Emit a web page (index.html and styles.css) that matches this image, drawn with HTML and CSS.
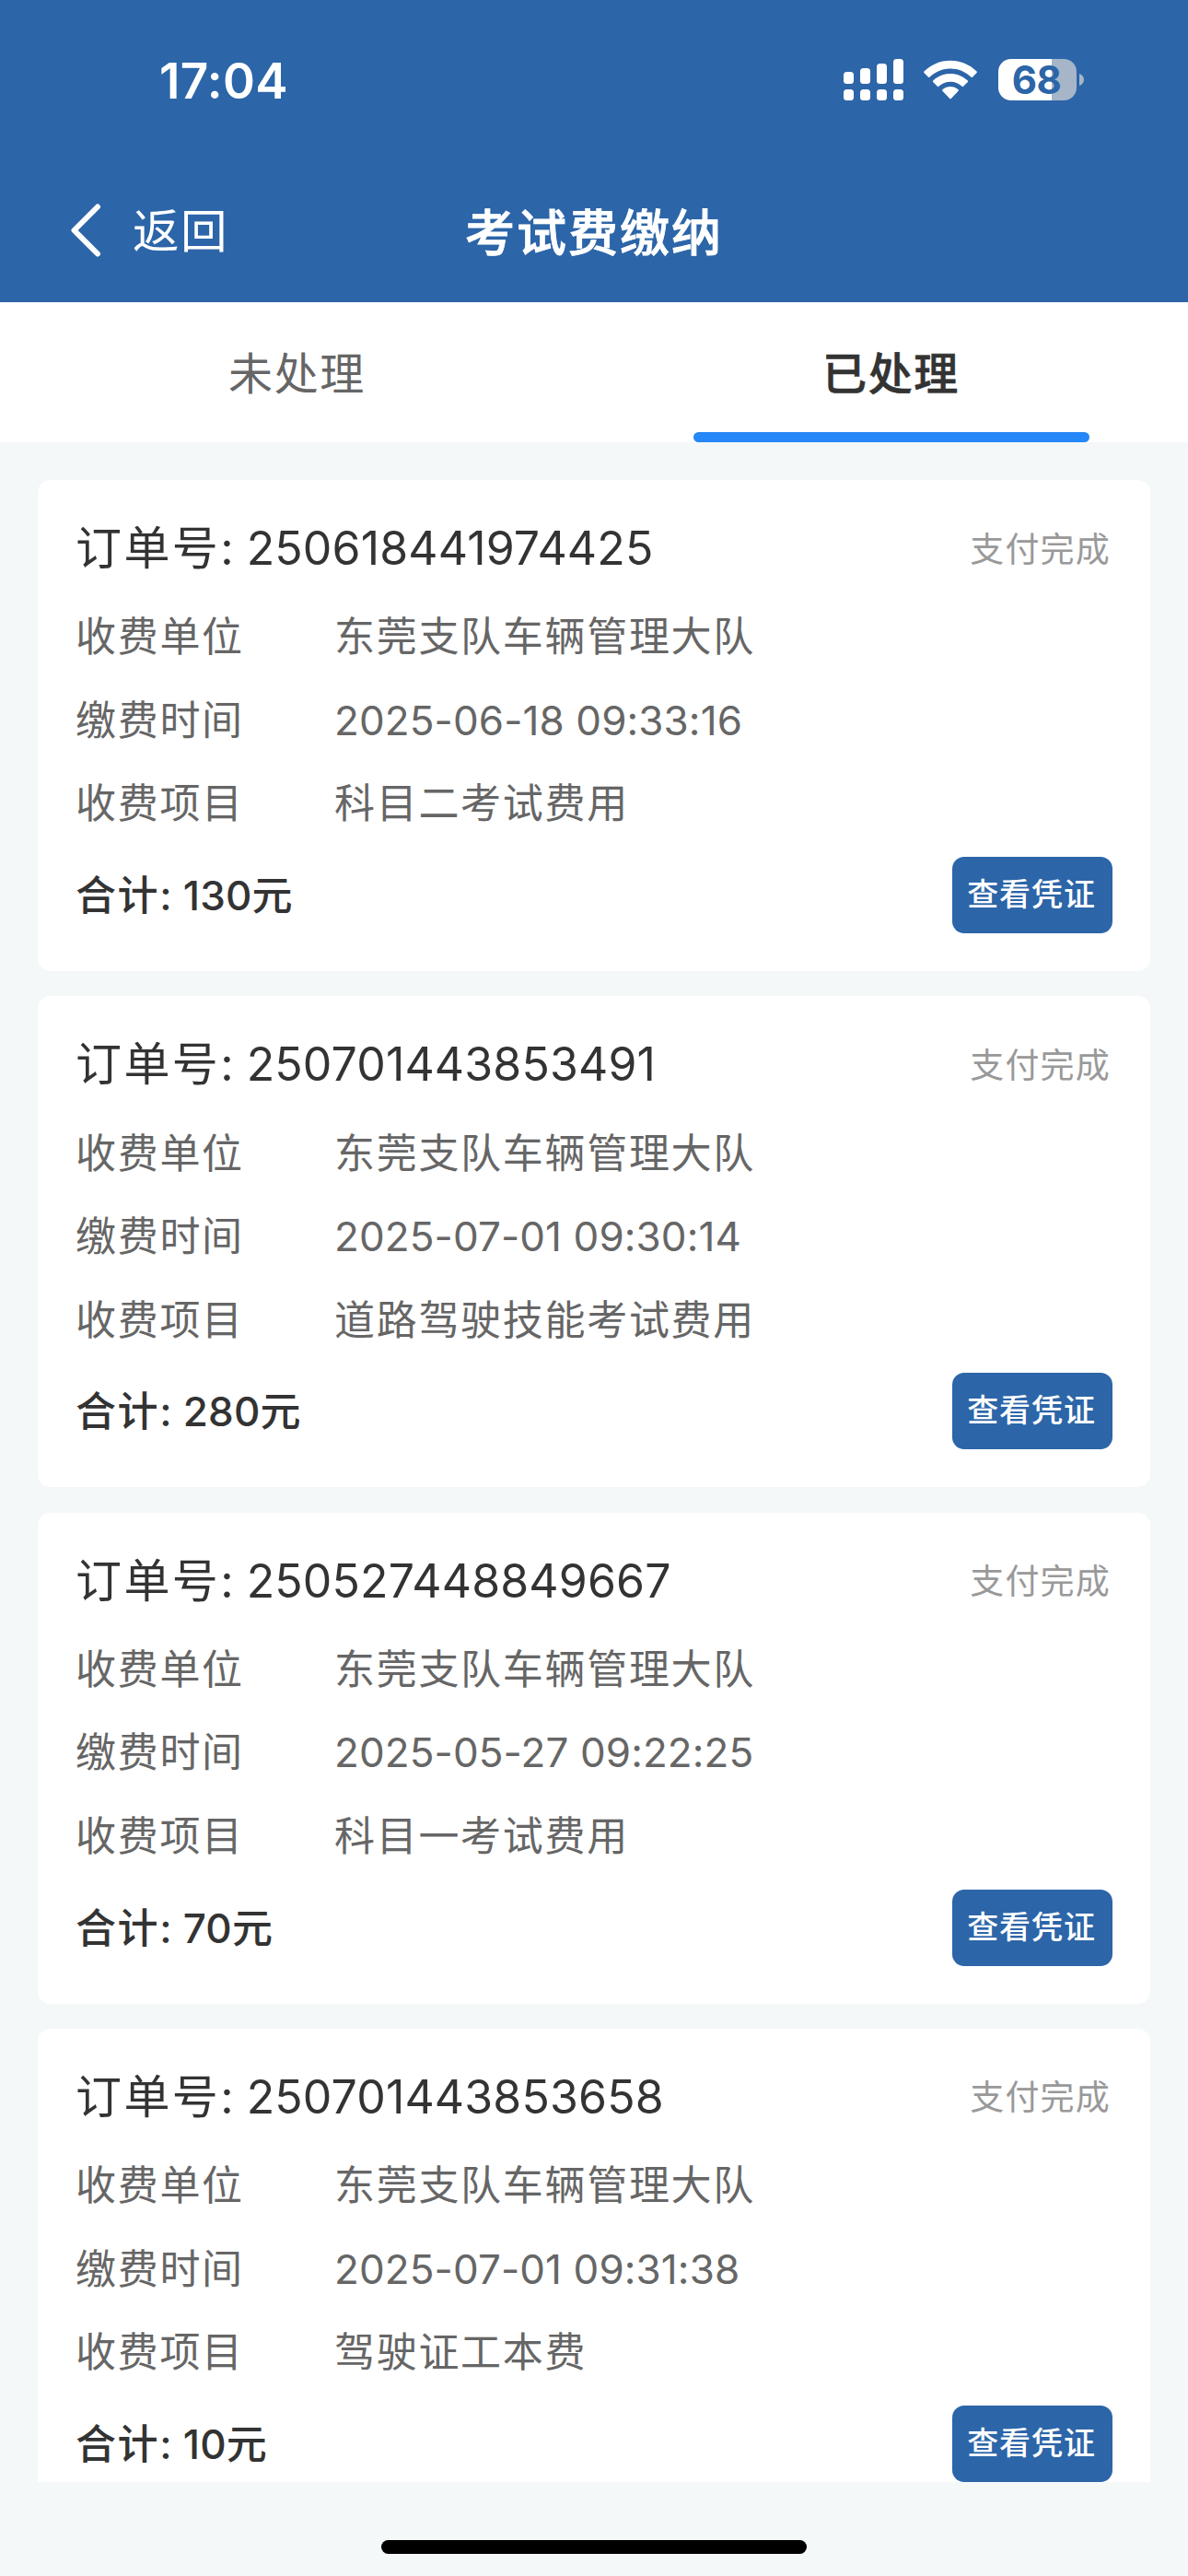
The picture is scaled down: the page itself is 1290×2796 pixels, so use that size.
FILE: index.html
```html
<!DOCTYPE html>
<html lang="zh-CN">
<head>
<meta charset="utf-8">
<title>考试费缴纳</title>
<link rel="stylesheet" href="styles.css">
</head>
<body>
<header class="header">
  <div class="status">
    <span class="time">17:04</span>
    <div class="status-icons">
      <svg class="signal" width="65" height="45" viewBox="0 0 65 45" fill="#fff">
        <rect x="0" y="14" width="11" height="13" rx="3.5"/><rect x="18" y="10" width="11" height="17" rx="3.5"/><rect x="36" y="5" width="11" height="22" rx="3.5"/><rect x="54" y="0" width="11" height="27" rx="3.5"/>
        <rect x="0" y="33" width="11" height="12" rx="3.5"/><rect x="18" y="33" width="11" height="12" rx="3.5"/><rect x="36" y="33" width="11" height="12" rx="3.5"/><rect x="54" y="33" width="11" height="12" rx="3.5"/>
      </svg>
      <svg class="wifi" width="58" height="43" viewBox="0 0 58 43" fill="#fff">
        <path d="M.7 12.2C8.300 4.900 18.200.7 29 .7s20.700 4.200 28.300 11.500c.8.8.8 1.300.1 2L53.200 18.500c-.7.7-1.200.7-1.900 0C45.300 12.800 37.500 9.500 29 9.500S12.700 12.800 6.700 18.500c-.7.7-1.200.7-1.900 0L.6 14.200c-.7-.7-.7-1.200.1-2z"/>
        <path d="M10.500 22.300C15.500 17.600 21.900 15 29 15s13.500 2.600 18.500 7.300c.8.8.8 1.300.1 2L43.300 28.600c-.7.7-1.200.7-2 0C37.900 25.500 33.700 23.800 29 23.800s-8.900 1.700-12.300 4.800c-.8.7-1.300.7-2 0L10.400 24.300c-.7-.7-.7-1.200.1-2z"/>
        <path d="M20.700 32.100C22.900 30.100 25.800 29 29 29s6.100 1.100 8.300 3.100c.8.7.8 1.300.1 2L30 41.700c-.7.7-1.300.7-2 0L20.600 34.100c-.7-.7-.7-1.300.1-2z"/>
      </svg>
      <div class="battery"><div class="battery-body">68</div><svg width="5" height="13" viewBox="0 0 5 13"><path d="M0 0c3 1 5 3.500 5 6.500S3 12 0 13z" fill="#a6b6c8"/></svg></div>
    </div>
  </div>
  <nav class="nav">
    <a class="back"><svg width="34" height="58" viewBox="0 0 34 58" fill="none" stroke="#fff" stroke-width="6" stroke-linecap="round" stroke-linejoin="round"><path d="M30 3.500L4.500 29L30 54.500"/></svg><span>返回</span></a>
    <h1 class="title">考试费缴纳</h1>
  </nav>
</header>
<div class="tabs">
  <div class="tab">未处理</div>
  <div class="tab active">已处理</div>
</div>
<main class="list">
  <section class="card">
    <div class="card-head"><div class="order"><span class="cjk">订单号</span>: <span class="no">250618441974425</span></div><div class="state">支付完成</div></div>
    <dl class="rows">
      <dt>收费单位</dt><dd>东莞支队车辆管理大队</dd>
      <dt>缴费时间</dt><dd class="num">2025-06-18 09:33:16</dd>
      <dt>收费项目</dt><dd>科目二考试费用</dd>
    </dl>
    <div class="card-foot"><div class="total"><span class="cjk">合计</span>: 130元</div><button class="voucher">查看凭证</button></div>
  </section>
  <section class="card">
    <div class="card-head"><div class="order"><span class="cjk">订单号</span>: <span class="no">250701443853491</span></div><div class="state">支付完成</div></div>
    <dl class="rows">
      <dt>收费单位</dt><dd>东莞支队车辆管理大队</dd>
      <dt>缴费时间</dt><dd class="num">2025-07-01 09:30:14</dd>
      <dt>收费项目</dt><dd>道路驾驶技能考试费用</dd>
    </dl>
    <div class="card-foot"><div class="total"><span class="cjk">合计</span>: 280元</div><button class="voucher">查看凭证</button></div>
  </section>
  <section class="card">
    <div class="card-head"><div class="order"><span class="cjk">订单号</span>: <span class="no">250527448849667</span></div><div class="state">支付完成</div></div>
    <dl class="rows">
      <dt>收费单位</dt><dd>东莞支队车辆管理大队</dd>
      <dt>缴费时间</dt><dd class="num">2025-05-27 09:22:25</dd>
      <dt>收费项目</dt><dd>科目一考试费用</dd>
    </dl>
    <div class="card-foot"><div class="total"><span class="cjk">合计</span>: 70元</div><button class="voucher">查看凭证</button></div>
  </section>
  <section class="card">
    <div class="card-head"><div class="order"><span class="cjk">订单号</span>: <span class="no">250701443853658</span></div><div class="state">支付完成</div></div>
    <dl class="rows">
      <dt>收费单位</dt><dd>东莞支队车辆管理大队</dd>
      <dt>缴费时间</dt><dd class="num">2025-07-01 09:31:38</dd>
      <dt>收费项目</dt><dd>驾驶证工本费</dd>
    </dl>
    <div class="card-foot"><div class="total"><span class="cjk">合计</span>: 10元</div><button class="voucher">查看凭证</button></div>
  </section>
</main>
<footer class="home"><div class="home-bar"></div></footer>
</body>
</html>
```

FILE: styles.css
```css
* { box-sizing: border-box; }
body {
  margin: 0;
  width: 1290px;
  height: 2796px;
  overflow: hidden;
  display: flex;
  flex-direction: column;
  background: #f4f8f9;
  color: #333;
  font-family: Inter, "Noto Sans CJK SC", sans-serif;
}

/* Header */
.header { height: 328px; flex: none; background: #2c65a8; color: #fff; }
.status {
  height: 172px;
  padding: 0 113px 0 173px;
  display: flex;
  justify-content: space-between;
  align-items: center;
}
.time { font-size: 53px; line-height: 60px; font-weight: 600; letter-spacing: 0.3px; padding-top: 4px; }
.status-icons { display: flex; align-items: center; }
.wifi { margin-left: 22px; }
.battery { margin-left: 23px; display: flex; align-items: center; gap: 3px; }
.battery-body {
  width: 85px;
  height: 45px;
  padding-right: 2px;
  border-radius: 14px;
  background: linear-gradient(90deg, #fff 58px, #a6b6c8 58px);
  color: #2c65a8;
  font-size: 42px;
  line-height: 46px;
  font-weight: 700;
  letter-spacing: -0.5px;
  text-align: center;
}
.nav {
  height: 156px;
  padding: 0 76px;
  display: grid;
  grid-template-columns: 1fr auto 1fr;
  align-items: start;
}
.back { display: flex; align-items: center; gap: 34px; padding-top: 47px; font-size: 50.5px; line-height: 58px; letter-spacing: 1.5px; }
.back span { padding-top: 3px; }
.title { margin: 0; padding-top: 49px; font-size: 54px; line-height: 66px; font-weight: 500; letter-spacing: 2px; -webkit-text-stroke: 0.9px currentColor; }

/* Tabs */
.tabs { height: 152px; flex: none; display: grid; grid-template-columns: 1fr 1fr; background: #fff; }
.tab {
  display: flex;
  flex-direction: column;
  align-items: center;
  justify-content: flex-start;
  font-size: 48px;
  line-height: 156px;
  letter-spacing: 1.6px;
  color: #666;
}
.tab.active { color: #333; font-weight: 500; -webkit-text-stroke: 0.6px currentColor; }
.tab.active::after {
  content: "";
  width: 430px;
  height: 11px;
  margin-top: -15px;
  border-radius: 5.5px;
  background: #2688f8;
}

/* Order cards */
.list {
  height: 2214px;
  flex: none;
  padding: 41px 41px 0;
  display: flex;
  flex-direction: column;
  gap: 27.33px;
  overflow: hidden;
}
.card { height: 533px; flex: none; padding: 35px 41px 0; border-radius: 14px; background: #fff; }
.card-head { height: 77px; display: flex; align-items: center; justify-content: space-between; }
.order { font-size: 50px; line-height: 77px; padding-top: 2px; white-space: nowrap; font-feature-settings: "calt" 0; }
.order .cjk { letter-spacing: 2.4px; }
.no { letter-spacing: 0.15px; }
.state { font-size: 37px; line-height: 77px; padding: 3px 2px 0 0; letter-spacing: 1.2px; color: #999; }
.rows {
  margin: 13.2px 0 12.2px;
  display: grid;
  grid-template-columns: 281px 1fr;
  grid-auto-rows: 90.5px;
  font-size: 44px;
  line-height: 90.5px;
  letter-spacing: 1.7px;
  color: #666;
}
.rows dt, .rows dd { margin: 0; white-space: nowrap; }
.rows .num { letter-spacing: 0.1px; }
.card-foot { height: 83px; display: flex; align-items: center; justify-content: space-between; }
.total { font-size: 44px; line-height: 83px; padding-top: 2px; font-weight: 500; letter-spacing: 0.2px; font-feature-settings: "calt" 0; }
.total .cjk { letter-spacing: 1.6px; }
.voucher {
  width: 174px;
  height: 83px;
  padding: 0 2px 2px 0;
  border: 0;
  border-radius: 13px;
  background: #2c65a8;
  color: #fff;
  font: 500 34px/81px Inter, "Noto Sans CJK SC", sans-serif;
  letter-spacing: 0.9px;
}

/* Home indicator */
.home { flex: 1; display: flex; justify-content: center; padding-top: 63px; }
.home-bar { width: 462px; height: 15px; border-radius: 7.5px; background: #000; }
```
